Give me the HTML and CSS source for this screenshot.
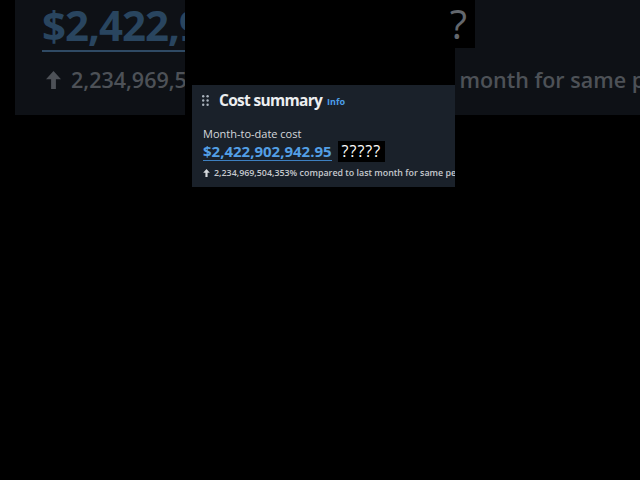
FILE: index.html
```html
<!DOCTYPE html>
<html lang="en">
<head>
    <title>Cost summary</title>
    <link rel="stylesheet" href="styles.css">
</head>
<body>
    <div class="backdrop">
        <div class="bd-row">
            <div class="bd-amount">$2,422,902,942.95</div>
            <div class="bd-box">?</div>
        </div>
        <div class="bd-sub">
            <svg class="bd-arrow" width="15" height="18" viewBox="0 0 10 12">
                <path d="M5 0 L10 5.5 L6.6 5.5 L6.6 12 L3.4 12 L3.4 5.5 L0 5.5 Z" fill="#4d5157"/>
            </svg>
            <span>2,234,969,504,353% compared to last month for same period</span>
        </div>
    </div>

    <div class="cutout">
        <div class="card">
            <div class="card-header">
                <svg class="grip" width="7" height="11" viewBox="0 0 7 11">
                    <circle cx="1.2" cy="1.2" r="1.2" fill="#aab3bd"/>
                    <circle cx="5.6" cy="1.2" r="1.2" fill="#aab3bd"/>
                    <circle cx="1.2" cy="5.5" r="1.2" fill="#aab3bd"/>
                    <circle cx="5.6" cy="5.5" r="1.2" fill="#aab3bd"/>
                    <circle cx="1.2" cy="9.8" r="1.2" fill="#aab3bd"/>
                    <circle cx="5.6" cy="9.8" r="1.2" fill="#aab3bd"/>
                </svg>
                <span class="title">Cost summary</span>
                <span class="info">Info</span>
            </div>
            <div class="card-body">
                <div class="label">Month-to-date cost</div>
                <div class="amount-row">
                    <span class="amount">$2,422,902,942.95</span>
                    <span class="qbox">?????</span>
                </div>
                <div class="sub">
                    <svg class="arrow" width="7" height="8" viewBox="0 0 10 12">
                        <path d="M5 0 L10 5.5 L6.6 5.5 L6.6 12 L3.4 12 L3.4 5.5 L0 5.5 Z" fill="#d5d8dc"/>
                    </svg>
                    <span>2,234,969,504,353% compared to last month for same period</span>
                </div>
            </div>
        </div>
    </div>
</body>
</html>
```

FILE: styles.css
```css
body {
    margin: 0;
    width: 640px;
    height: 480px;
    background-color: #000;
    font-family: "Open Sans", "Noto Sans", sans-serif;
    position: relative;
    overflow: hidden;
}

/* dimmed, zoomed copy of the card behind */
.backdrop {
    margin-left: 15px;
    width: 625px;
    height: 115px;
    background-color: #0e1116;
    overflow: hidden;
}
.bd-row {
    display: flex;
    align-items: flex-start;
}
.bd-amount {
    width: 143px;
    margin-left: 27px;
    overflow: hidden;
    white-space: nowrap;
    font-size: 42px;
    font-weight: 700;
    line-height: 50px;
    color: #29455f;
    border-bottom: 2px solid #2f4a64;
    letter-spacing: -1px;
}
.bd-box {
    width: 290px;
    height: 48px;
    flex-shrink: 0;
    background-color: #000;
    color: #63676d;
    font-size: 40px;
    line-height: 48px;
    text-align: right;
    padding-right: 8px;
    box-sizing: border-box;
}
.bd-sub {
    display: flex;
    align-items: center;
    gap: 10px;
    margin: 13px 0 0 31px;
    white-space: nowrap;
    font-size: 21.5px;
    font-weight: 600;
    color: #4d5157;
}
.bd-arrow,
.arrow {
    flex-shrink: 0;
}

/* black frame around the card */
.cutout {
    position: absolute;
    left: 185px;
    top: 48px;
    width: 270px;
    height: 144px;
    padding: 37px 0 0 7px;
    box-sizing: border-box;
    background-color: #000;
}
.card {
    width: 263px;
    height: 102px;
    background-color: #1a212a;
    overflow: hidden;
}
.card-header {
    display: flex;
    align-items: center;
    height: 30px;
    padding-left: 10px;
}
.grip {
    margin-right: 10px;
}
.title {
    font-size: 15.5px;
    font-weight: 700;
    color: #eceef0;
    letter-spacing: -0.7px;
}
.info {
    margin-left: 5px;
    margin-top: 3px;
    font-size: 9px;
    font-weight: 700;
    color: #4d9fe8;
}
.card-body {
    padding: 12px 0 0 11px;
}
.label {
    font-size: 11px;
    line-height: 14px;
    color: #d5d8dc;
}
.amount-row {
    display: flex;
    align-items: center;
    gap: 6px;
}
.amount {
    font-size: 15px;
    font-weight: 700;
    line-height: 18px;
    color: #539fe5;
    border-bottom: 1px solid #3d7fbf;
}
.qbox {
    background-color: #000;
    color: #fff;
    font-size: 16px;
    line-height: 21px;
    letter-spacing: 1px;
    padding: 0 4px;
}
.sub {
    display: flex;
    align-items: center;
    gap: 4px;
    margin-top: 4px;
    white-space: nowrap;
    font-size: 8.9px;
    font-weight: 600;
    color: #c6c9ce;
}
```
